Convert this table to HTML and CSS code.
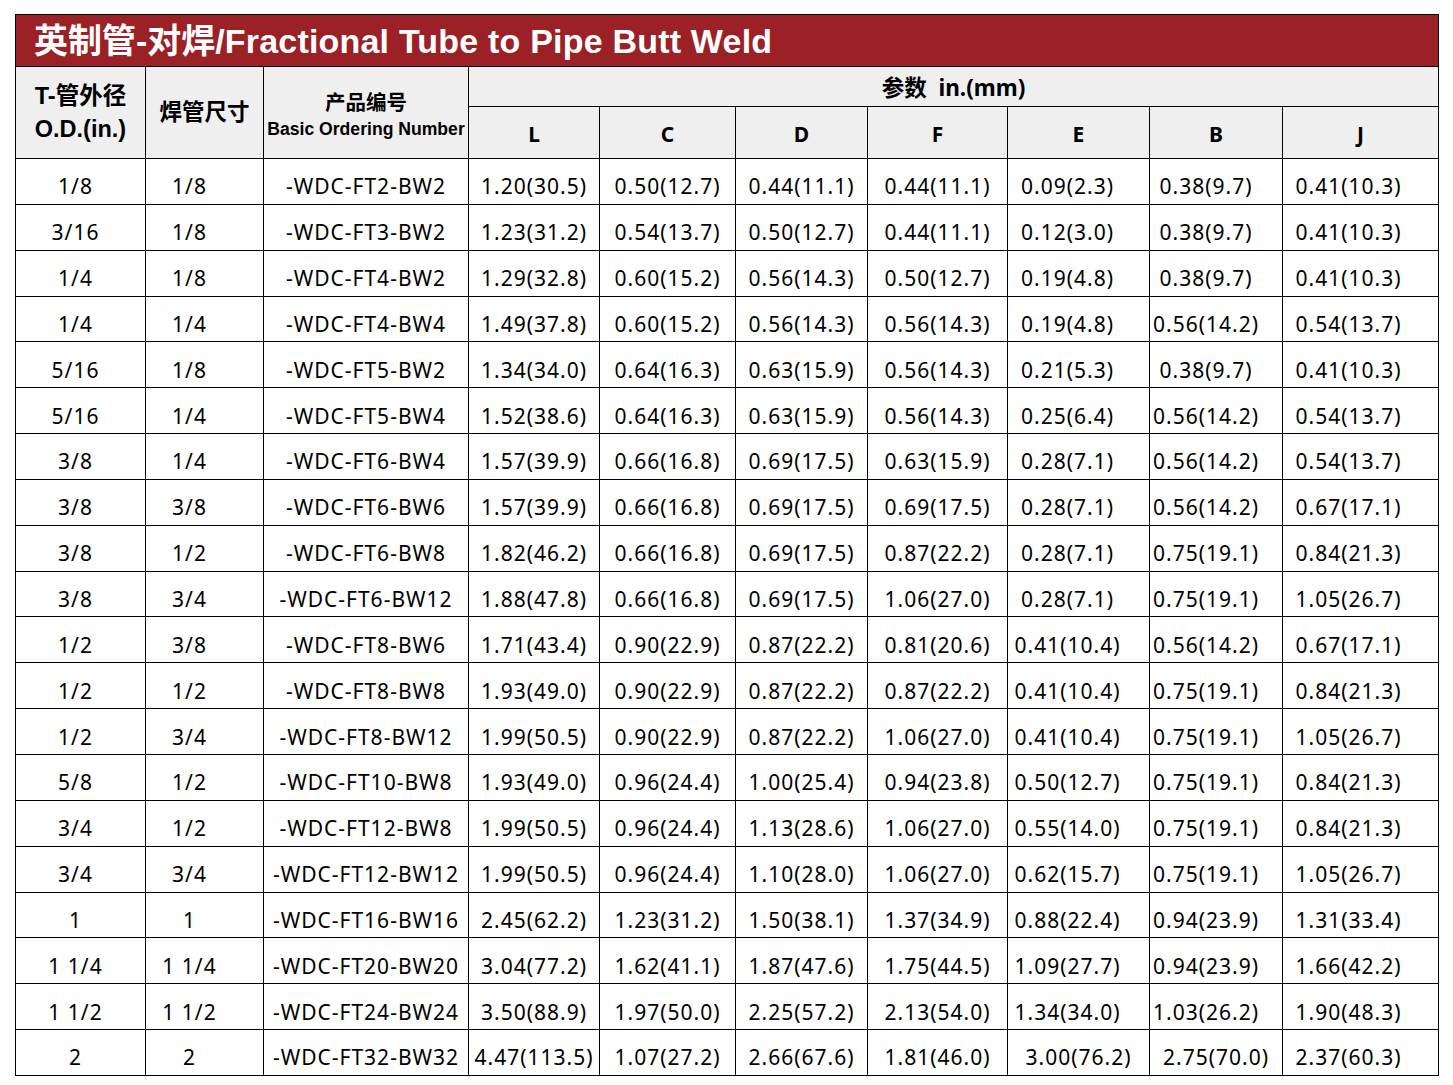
FILE: index.html
```html
<!DOCTYPE html>
<html lang="zh">
<head>
<meta charset="utf-8">
<title>英制管-对焊</title>
<link rel="stylesheet" href="styles.css">
</head>
<body>
<table class="spec">
<colgroup>
<col class="c1"><col class="c2"><col class="c3"><col class="c4"><col class="c5"><col class="c6"><col class="c7"><col class="c8"><col class="c9"><col class="c10">
</colgroup>
<thead>
<tr class="title-row"><th colspan="10" class="title">英制管-对焊/<span class="lat">Fractional Tube to Pipe Butt Weld</span></th></tr>
<tr class="head1">
<th rowspan="2" class="hd od">T-管外径<br>O.D.(in.)</th>
<th rowspan="2" class="hd hs">焊管尺寸</th>
<th rowspan="2" class="hd pnc"><span class="pn">产品编号</span><br><span class="bon">Basic Ordering Number</span></th>
<th colspan="7" class="hd params">参数&nbsp; in.(mm)</th>
</tr>
<tr class="head2">
<th class="hl">L</th><th class="hl">C</th><th class="hl">D</th><th class="hl">F</th><th class="hl">E</th><th class="hl">B</th><th class="hl">J</th>
</tr>
</thead>
<tbody>
<tr><td>1/8</td><td>1/8</td><td>-WDC-FT2-BW2</td><td>1.20(30.5)</td><td>0.50(12.7)</td><td>0.44(11.1)</td><td>0.44(11.1)</td><td>0.09(2.3)</td><td>0.38(9.7)</td><td>0.41(10.3)</td></tr>
<tr><td>3/16</td><td>1/8</td><td>-WDC-FT3-BW2</td><td>1.23(31.2)</td><td>0.54(13.7)</td><td>0.50(12.7)</td><td>0.44(11.1)</td><td>0.12(3.0)</td><td>0.38(9.7)</td><td>0.41(10.3)</td></tr>
<tr><td>1/4</td><td>1/8</td><td>-WDC-FT4-BW2</td><td>1.29(32.8)</td><td>0.60(15.2)</td><td>0.56(14.3)</td><td>0.50(12.7)</td><td>0.19(4.8)</td><td>0.38(9.7)</td><td>0.41(10.3)</td></tr>
<tr><td>1/4</td><td>1/4</td><td>-WDC-FT4-BW4</td><td>1.49(37.8)</td><td>0.60(15.2)</td><td>0.56(14.3)</td><td>0.56(14.3)</td><td>0.19(4.8)</td><td>0.56(14.2)</td><td>0.54(13.7)</td></tr>
<tr><td>5/16</td><td>1/8</td><td>-WDC-FT5-BW2</td><td>1.34(34.0)</td><td>0.64(16.3)</td><td>0.63(15.9)</td><td>0.56(14.3)</td><td>0.21(5.3)</td><td>0.38(9.7)</td><td>0.41(10.3)</td></tr>
<tr><td>5/16</td><td>1/4</td><td>-WDC-FT5-BW4</td><td>1.52(38.6)</td><td>0.64(16.3)</td><td>0.63(15.9)</td><td>0.56(14.3)</td><td>0.25(6.4)</td><td>0.56(14.2)</td><td>0.54(13.7)</td></tr>
<tr><td>3/8</td><td>1/4</td><td>-WDC-FT6-BW4</td><td>1.57(39.9)</td><td>0.66(16.8)</td><td>0.69(17.5)</td><td>0.63(15.9)</td><td>0.28(7.1)</td><td>0.56(14.2)</td><td>0.54(13.7)</td></tr>
<tr><td>3/8</td><td>3/8</td><td>-WDC-FT6-BW6</td><td>1.57(39.9)</td><td>0.66(16.8)</td><td>0.69(17.5)</td><td>0.69(17.5)</td><td>0.28(7.1)</td><td>0.56(14.2)</td><td>0.67(17.1)</td></tr>
<tr><td>3/8</td><td>1/2</td><td>-WDC-FT6-BW8</td><td>1.82(46.2)</td><td>0.66(16.8)</td><td>0.69(17.5)</td><td>0.87(22.2)</td><td>0.28(7.1)</td><td>0.75(19.1)</td><td>0.84(21.3)</td></tr>
<tr><td>3/8</td><td>3/4</td><td>-WDC-FT6-BW12</td><td>1.88(47.8)</td><td>0.66(16.8)</td><td>0.69(17.5)</td><td>1.06(27.0)</td><td>0.28(7.1)</td><td>0.75(19.1)</td><td>1.05(26.7)</td></tr>
<tr><td>1/2</td><td>3/8</td><td>-WDC-FT8-BW6</td><td>1.71(43.4)</td><td>0.90(22.9)</td><td>0.87(22.2)</td><td>0.81(20.6)</td><td>0.41(10.4)</td><td>0.56(14.2)</td><td>0.67(17.1)</td></tr>
<tr><td>1/2</td><td>1/2</td><td>-WDC-FT8-BW8</td><td>1.93(49.0)</td><td>0.90(22.9)</td><td>0.87(22.2)</td><td>0.87(22.2)</td><td>0.41(10.4)</td><td>0.75(19.1)</td><td>0.84(21.3)</td></tr>
<tr><td>1/2</td><td>3/4</td><td>-WDC-FT8-BW12</td><td>1.99(50.5)</td><td>0.90(22.9)</td><td>0.87(22.2)</td><td>1.06(27.0)</td><td>0.41(10.4)</td><td>0.75(19.1)</td><td>1.05(26.7)</td></tr>
<tr><td>5/8</td><td>1/2</td><td>-WDC-FT10-BW8</td><td>1.93(49.0)</td><td>0.96(24.4)</td><td>1.00(25.4)</td><td>0.94(23.8)</td><td>0.50(12.7)</td><td>0.75(19.1)</td><td>0.84(21.3)</td></tr>
<tr><td>3/4</td><td>1/2</td><td>-WDC-FT12-BW8</td><td>1.99(50.5)</td><td>0.96(24.4)</td><td>1.13(28.6)</td><td>1.06(27.0)</td><td>0.55(14.0)</td><td>0.75(19.1)</td><td>0.84(21.3)</td></tr>
<tr><td>3/4</td><td>3/4</td><td>-WDC-FT12-BW12</td><td>1.99(50.5)</td><td>0.96(24.4)</td><td>1.10(28.0)</td><td>1.06(27.0)</td><td>0.62(15.7)</td><td>0.75(19.1)</td><td>1.05(26.7)</td></tr>
<tr><td>1</td><td>1</td><td>-WDC-FT16-BW16</td><td>2.45(62.2)</td><td>1.23(31.2)</td><td>1.50(38.1)</td><td>1.37(34.9)</td><td>0.88(22.4)</td><td>0.94(23.9)</td><td>1.31(33.4)</td></tr>
<tr><td>1 1/4</td><td>1 1/4</td><td>-WDC-FT20-BW20</td><td>3.04(77.2)</td><td>1.62(41.1)</td><td>1.87(47.6)</td><td>1.75(44.5)</td><td>1.09(27.7)</td><td>0.94(23.9)</td><td>1.66(42.2)</td></tr>
<tr><td>1 1/2</td><td>1 1/2</td><td>-WDC-FT24-BW24</td><td>3.50(88.9)</td><td>1.97(50.0)</td><td>2.25(57.2)</td><td>2.13(54.0)</td><td>1.34(34.0)</td><td>1.03(26.2)</td><td>1.90(48.3)</td></tr>
<tr class="last"><td>2</td><td>2</td><td>-WDC-FT32-BW32</td><td>4.47(113.5)</td><td>1.07(27.2)</td><td>2.66(67.6)</td><td>1.81(46.0)</td><td>3.00(76.2)</td><td>2.75(70.0)</td><td>2.37(60.3)</td></tr>
</tbody>
</table>
</body>
</html>
```

FILE: styles.css
```css
html, body {
  margin: 0;
  padding: 0;
  background: #ffffff;
}
body {
  padding: 14px 15px 0 15px;
  font-family: "Noto Sans", "Noto Sans CJK SC", sans-serif;
  color: #000;
}
.spec {
  border-collapse: collapse;
  table-layout: fixed;
  width: 1424px;
}
.c1 { width: 130px; }
.c2 { width: 118px; }
.c3 { width: 205px; }
.c4 { width: 131px; }
.c5 { width: 136px; }
.c6 { width: 132px; }
.c7 { width: 140px; }
.c8 { width: 142px; }
.c9 { width: 133px; }
.c10 { width: 156px; }
.spec th, .spec td {
  border: 1px solid #000;
  padding: 0;
  overflow: visible;
  white-space: nowrap;
}
.title-row th {
  height: 51px;
}
.title {
  background: #9c2126;
  color: #ffffff;
  text-align: left;
  padding-left: 18px !important;
  font-family: "Liberation Sans", "Noto Sans CJK SC", sans-serif;
  font-weight: 700;
  font-size: 34px;
  line-height: 1;
}
.title .lat {
  letter-spacing: 0.2px;
}
.head1 th { height: 37px; }
.head2 th { height: 49px; }
.hd, .hl {
  background: #efefef;
  font-weight: 700;
  text-align: center;
}
.hd {
  font-family: "Liberation Sans", "Noto Sans CJK SC", sans-serif;
  font-size: 23.5px;
  line-height: 33px;
}
.hs {
  font-size: 22.5px;
}
.pnc {
  line-height: 25px;
  padding-top: 6px !important;
}
.pn {
  font-size: 20.5px;
}
.bon {
  font-size: 17.6px;
}
.params {
  font-family: "Noto Sans", "Noto Sans CJK SC", sans-serif;
  font-size: 22.5px;
  line-height: 30px;
  padding-top: 2px !important;
}
.hl {
  font-family: "Noto Sans", sans-serif;
  font-size: 21px;
  padding-top: 2px !important;
}
.spec td {
  height: 45.85px;
  text-align: center;
  font-size: 21px;
  letter-spacing: 1px;
  line-height: 24px;
  vertical-align: middle;
  padding-top: 10px;
  box-sizing: border-box;
}
.spec td:nth-child(1) { padding-right: 10px; }
.spec td:nth-child(2) { padding-right: 30px; }
.spec td:nth-child(8) { padding-right: 22px; }
.spec td:nth-child(9) { padding-right: 20px; }
.spec td:nth-child(10) { padding-right: 24px; }
.spec tr.last td:nth-child(8),
.spec tr.last td:nth-child(9) { padding-right: 0; }
```
